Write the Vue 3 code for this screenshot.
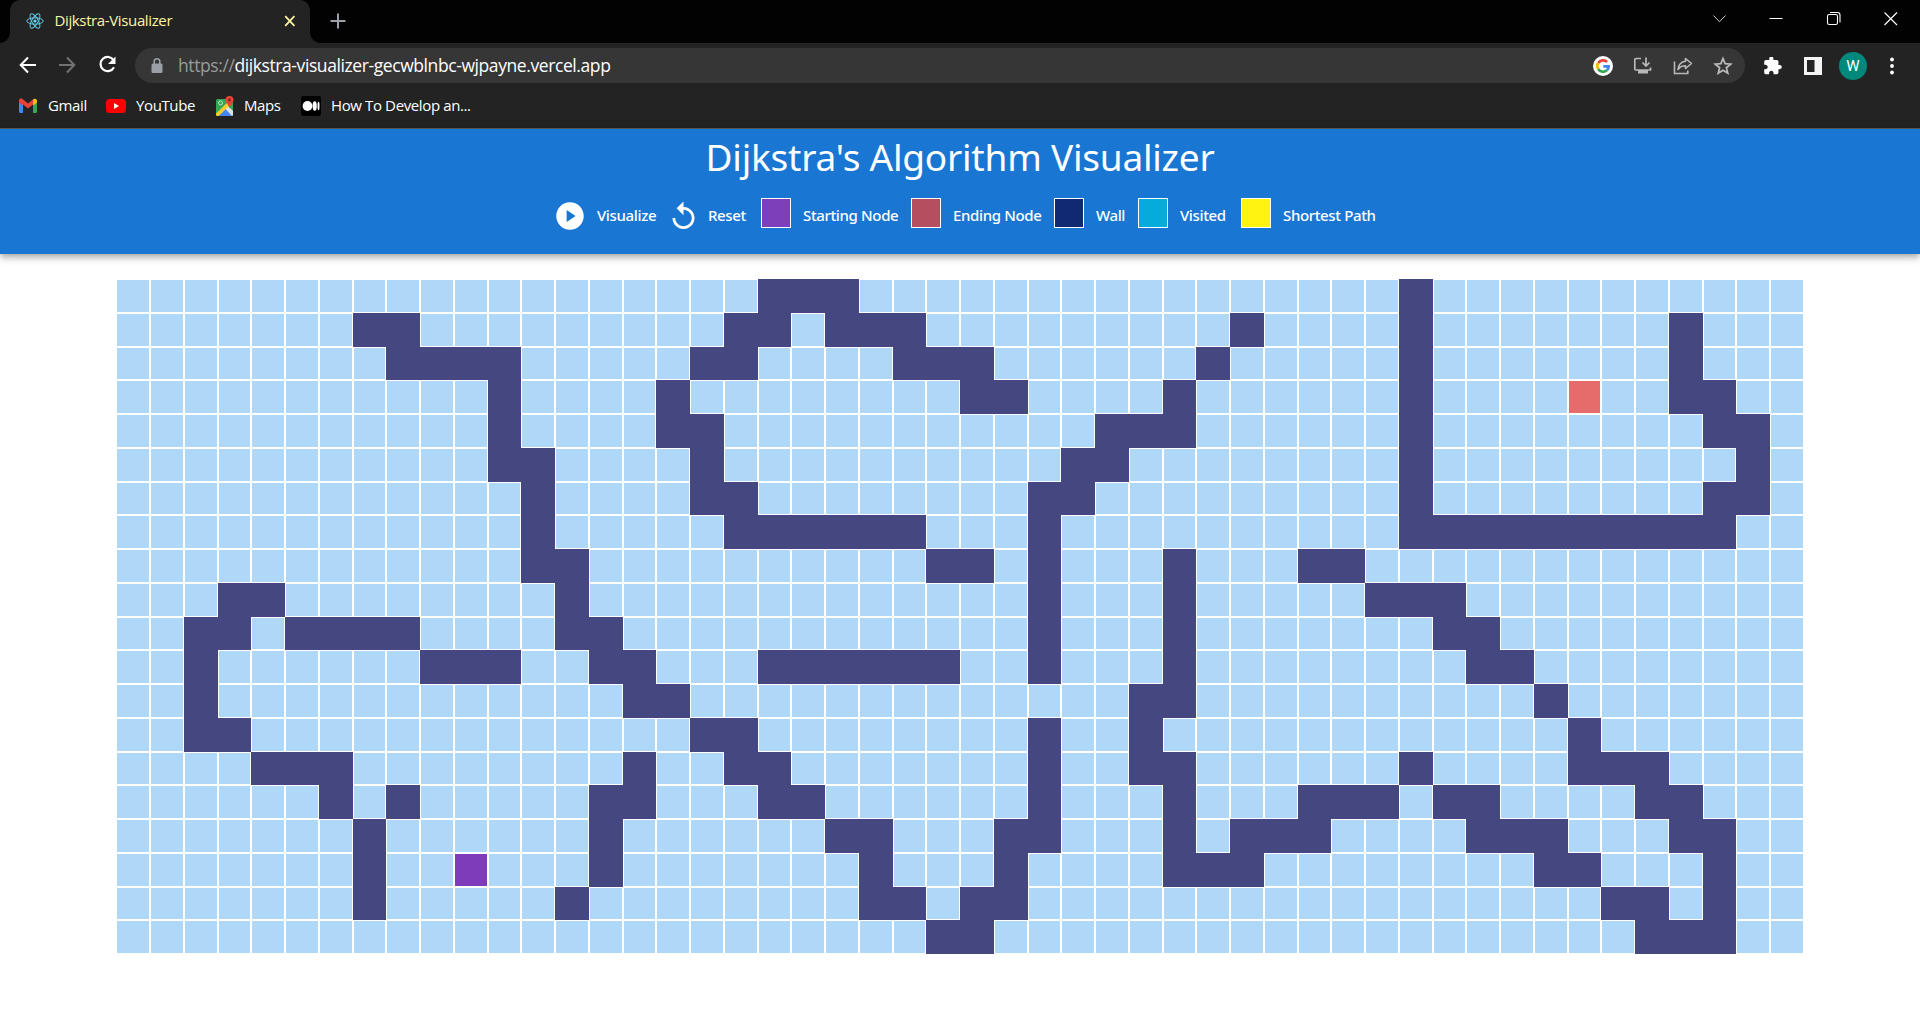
<script setup>
const ROWS = 20
const COLS = 50
const walls = [
  [[19, 21], [38, 38]],
  [[7, 8], [18, 19], [21, 23], [33, 33], [38, 38], [46, 46]],
  [[8, 11], [17, 18], [23, 25], [32, 32], [38, 38], [46, 46]],
  [[11, 11], [16, 16], [25, 26], [31, 31], [38, 38], [46, 47]],
  [[11, 11], [16, 17], [29, 31], [38, 38], [47, 48]],
  [[11, 12], [17, 17], [28, 29], [38, 38], [48, 48]],
  [[12, 12], [17, 18], [27, 28], [38, 38], [47, 48]],
  [[12, 12], [18, 23], [27, 27], [38, 47]],
  [[12, 13], [24, 25], [27, 27], [31, 31], [35, 36]],
  [[3, 4], [13, 13], [27, 27], [31, 31], [37, 39]],
  [[2, 3], [5, 8], [13, 14], [27, 27], [31, 31], [39, 40]],
  [[2, 2], [9, 11], [14, 15], [19, 24], [27, 27], [31, 31], [40, 41]],
  [[2, 2], [15, 16], [30, 31], [42, 42]],
  [[2, 3], [17, 18], [27, 27], [30, 30], [43, 43]],
  [[4, 6], [15, 15], [18, 19], [27, 27], [30, 31], [38, 38], [43, 45]],
  [[6, 6], [8, 8], [14, 15], [19, 20], [27, 27], [31, 31], [35, 37], [39, 40], [45, 46]],
  [[7, 7], [14, 14], [21, 22], [26, 27], [31, 31], [33, 35], [40, 42], [46, 47]],
  [[7, 7], [14, 14], [22, 22], [26, 26], [31, 33], [42, 43], [47, 47]],
  [[7, 7], [13, 13], [22, 23], [25, 26], [44, 45], [47, 47]],
  [[24, 25], [45, 47]],
]
const start = { row: 17, col: 10 }
const end = { row: 3, col: 43 }

function kind(row, col) {
  if (row === start.row && col === start.col) return 'start'
  if (row === end.row && col === end.col) return 'end'
  return walls[row].some(([a, b]) => col >= a && col <= b) ? 'wall' : ''
}
const grid = Array.from({ length: ROWS }, (_, r) => Array.from({ length: COLS }, (_, c) => kind(r, c)))
</script>

<template>
  <div class="window">
    <div class="tabstrip">
      <div class="tab">
        <svg class="react" width="18" height="18" viewBox="0 0 18 18" fill="none" stroke="#61c9e6" stroke-width="1">
          <ellipse cx="9" cy="9" rx="8.2" ry="3.2" />
          <ellipse cx="9" cy="9" rx="8.2" ry="3.2" transform="rotate(60 9 9)" />
          <ellipse cx="9" cy="9" rx="8.2" ry="3.2" transform="rotate(120 9 9)" />
          <circle cx="9" cy="9" r="1.6" fill="#61dafb" stroke="none" />
        </svg>
        <span class="tab-title">Dijkstra-Visualizer</span>
        <svg class="tab-close" width="12" height="12" viewBox="0 0 12 12" stroke="#fdf5a0" stroke-width="1.8"><path d="M1.2 1.2l9.2 9.6M10.4 1.2l-9.2 9.6" /></svg>
      </div>
      <svg class="newtab" width="16" height="18" viewBox="0 0 16 18" stroke="#9aa0a6" stroke-width="2"><path d="M0.5 9h15M8 1.500v15" /></svg>
      <div class="controls">
        <svg width="16" height="16" viewBox="0 0 16 16" fill="none" stroke="#ccc" stroke-width="1"><path d="M2.500 5.500l6 6.200 6-6.200" /></svg>
        <svg width="16" height="16" viewBox="0 0 16 16" stroke="#fff"><path d="M1.500 8.500h13" /></svg>
        <svg width="16" height="16" viewBox="0 0 16 16" fill="none" stroke="#fff" stroke-width="1.100"><rect x="1.500" y="4.500" width="10" height="10" rx="1.800" /><path d="M4 2.500h7.500a2.500 2.500 0 0 1 2.500 2.500v7.500" /></svg>
        <svg width="16" height="16" viewBox="0 0 16 16" stroke="#fff" stroke-width="1.200"><path d="M1.500 2.500l12.500 12.500M14 2.500L1.500 15" /></svg>
      </div>
    </div>

    <div class="toolbar">
      <div class="nav">
        <svg width="20" height="20" viewBox="0 0 20 20" fill="none" stroke="#fff" stroke-width="2"><path d="M18 10H3M10 2.500L2.700 10l7.300 7.500" /></svg>
        <svg width="20" height="20" viewBox="0 0 20 20" fill="none" stroke="#717171" stroke-width="2"><path d="M1 10h15M9 2.500l7.300 7.500-7.300 7.500" /></svg>
        <svg width="20" height="20" viewBox="0 0 20 20" fill="none" stroke="#fff" stroke-width="2.200"><path d="M15.700 5.300A7.100 7.100 0 1 0 16 12.200" /><path d="M17.500 1.500v7.500h-7.500z" fill="#fff" stroke="none" /></svg>
      </div>
      <div class="omnibox">
        <svg class="lock" width="12" height="18" viewBox="0 0 12 18"><rect x="0.500" y="6.500" width="11" height="9.500" rx="1.500" fill="#9aa0a6" /><path d="M3.200 7V4.500a2.800 2.800 0 0 1 5.600 0V7" fill="none" stroke="#9aa0a6" stroke-width="1.600" /></svg>
        <span class="url"><span class="scheme">https://</span>dijkstra-visualizer-gecwblnbc-wjpayne.vercel.app</span>
        <div class="actions">
          <svg width="20" height="20" viewBox="0 0 20 20" fill="none" stroke-width="2.700"><circle cx="10" cy="10" r="10" fill="#fff" /><path d="M14.100 6A5.700 5.700 0 0 0 5.200 7" stroke="#ea4335" /><path d="M5.200 7a5.700 5.700 0 0 0 0 6" stroke="#fbbc05" /><path d="M5.200 13a5.700 5.700 0 0 0 8.700 1.300" stroke="#34a853" /><path d="M13.900 14.300A5.700 5.700 0 0 0 15.700 10.300H10.300" stroke="#4285f4" /></svg>
          <svg width="20" height="18" viewBox="0 0 20 18" fill="none" stroke="#b9b9b9" stroke-width="1.700"><path d="M8 1.500H3.200A1.400 1.400 0 0 0 1.800 3v8.500A1.400 1.400 0 0 0 3.200 13h14.300V10.500M13 0.500V9M9.500 5.500L13 9l3.500-3.500" /><path d="M5 13h10v3.500H5z" fill="#b9b9b9" stroke="none" /></svg>
          <svg width="20" height="18" viewBox="0 0 20 18" fill="none" stroke="#b9b9b9" stroke-width="1.600"><path d="M1.500 4.500v12h13.300v-3" /><path d="M12.500 1.500l6 5-6 5V8.700C9 8.700 6.800 9.800 5 12.500 5.500 8 8 4.800 12.500 4.300z" stroke-linejoin="round" /></svg>
          <svg width="20" height="20" viewBox="0 0 20 20" fill="none" stroke="#b9b9b9" stroke-width="1.800"><path d="M10 2.500l2.100 5.100 5.600.5-4.300 3.600 1.300 5.400L10 14.200l-4.700 2.900 1.300-5.400-4.300-3.600 5.600-.5z" /></svg>
        </div>
      </div>
      <div class="extras">
        <svg width="18" height="18" viewBox="2 1.500 21 21.500" fill="#fff"><path d="M20.500 11H19V7c0-1.100-.9-2-2-2h-4V3.500a2.500 2.500 0 0 0-5 0V5H4c-1.100 0-1.990.9-1.990 2v3.800H3.500c1.490 0 2.700 1.210 2.700 2.700s-1.210 2.700-2.700 2.700H2V20c0 1.100.9 2 2 2h3.800v-1.500c0-1.490 1.210-2.700 2.700-2.700 1.490 0 2.700 1.210 2.700 2.700V22H17c1.100 0 2-.9 2-2v-4h1.500a2.500 2.500 0 0 0 0-5z" /></svg>
        <svg width="18" height="18" viewBox="0 0 18 18"><path fill="#f4f4f4" fill-rule="evenodd" d="M0 0h18v18H0zM3 3v12h7.500V3z" /></svg>
        <span class="avatar">W</span>
        <svg class="menu" width="6" height="18" viewBox="0 0 6 18" fill="#fff"><circle cx="3" cy="2.500" r="1.900" /><circle cx="3" cy="9" r="1.900" /><circle cx="3" cy="15.500" r="1.900" /></svg>
      </div>
    </div>

    <div class="bookmarks">
      <svg width="20" height="18" viewBox="0 0 20 18"><path d="M1 3v11.500a1.500 1.500 0 0 0 1.500 1.500H5V7z" fill="#4285f4" /><path d="M19 3v11.500a1.500 1.500 0 0 1-1.500 1.500H15V7z" fill="#34a853" /><path d="M1 3.500C1 1.500 3.300 1 4.500 2L10 6.500 15.500 2v5L10 11.500 5 7.500v1L1 5.500z" fill="#ea4335" /><path d="M15 2.500c1.500-1.500 4-1 4 1.500v1.500l-4 3z" fill="#fbbc04" /></svg>
      <span class="b1">Gmail</span>
      <svg width="20" height="14" viewBox="0 0 20 14"><rect width="20" height="14" rx="3.500" fill="#f00" /><path d="M8 4v6L13 7z" fill="#fff" /></svg>
      <span class="b2">YouTube</span>
      <svg width="18" height="21" viewBox="0 0 18 21"><rect y="3" width="17" height="17" rx="1.500" fill="#34a853" /><path d="M1 19.500L11 9l6 6v3.500a1.500 1.500 0 0 1-1.500 1.500H1z" fill="#dfe3e8" /><path d="M2 20l7.500-7 6.500 7z" fill="#4285f4" /><path d="M0 17.500L13 5l2 3L2.500 20H1.500A1.500 1.500 0 0 1 0 18.500z" fill="#fbcc2b" /><circle cx="4.500" cy="7" r="2" fill="none" stroke="#b9e3c4" /><path d="M13.500 0a4 4 0 0 0-4 4c0 3 3 4 4 8.500 1-4.500 4-5.500 4-8.500a4 4 0 0 0-4-4z" fill="#ea4335" /><circle cx="13.500" cy="4" r="1.400" fill="#8c1d18" /></svg>
      <span class="b3">Maps</span>
      <svg width="20" height="20" viewBox="0 0 20 20"><rect width="20" height="20" rx="2" fill="#000" /><ellipse cx="6.500" cy="10" rx="4.900" ry="5" fill="#fff" /><ellipse cx="13.700" cy="10" rx="2.100" ry="4.700" fill="#fff" /><ellipse cx="17.500" cy="10" rx="1" ry="4.200" fill="#fff" /></svg>
      <span class="b4">How To Develop an...</span>
    </div>

    <header class="appbar">
      <h1>Dijkstra's Algorithm Visualizer</h1>
      <div class="legend">
        <svg class="play" width="30" height="30" viewBox="0 0 24 24" fill="#fff"><path d="M12 1C5.900 1 1 5.900 1 12s4.900 11 11 11 11-4.900 11-11S18.100 1 12 1zM9.300 16.800V7.200l7.200 4.800z" /></svg>
        <span class="label l1">Visualize</span>
        <svg class="reset" width="33" height="33" viewBox="0 0 24 24" fill="#fff"><path d="M12 5V1L7 6l5 5V7c3.310 0 6 2.690 6 6s-2.690 6-6 6-6-2.690-6-6H4c0 4.420 3.580 8 8 8s8-3.580 8-8-3.580-8-8-8z" /></svg>
        <span class="label l2">Reset</span>
        <i class="swatch purple"></i><span class="label l3">Starting Node</span>
        <i class="swatch red"></i><span class="label l4">Ending Node</span>
        <i class="swatch navy"></i><span class="label l5">Wall</span>
        <i class="swatch cyan"></i><span class="label l6">Visited</span>
        <i class="swatch yellow"></i><span class="label l7">Shortest Path</span>
      </div>
    </header>

    <main class="grid">
      <div v-for="(row, r) in grid" :key="r" class="row">
        <div v-for="(cell, c) in row" :key="c" class="cell" :class="cell"></div>
      </div>
    </main>
  </div>
</template>

<style>
body { margin: 0; background: #fff; overflow: hidden; }
</style>

<style scoped>
.window { width: 1920px; height: 1020px; overflow: hidden; font-family: "Open Sans", "Noto Sans", sans-serif; background: #fff; }
svg { display: block; flex: none; }
span { white-space: nowrap; }
.tabstrip { height: 43px; background: #020202; display: flex; align-items: flex-start; }
.tab { position: relative; box-sizing: border-box; width: 300px; height: 43px; margin-left: 10px; padding: 0 14px 1px 16px; background: #232323; border-radius: 10px 10px 0 0; display: flex; align-items: center; }
.tab::before, .tab::after { content: ""; position: absolute; bottom: 0; width: 10px; height: 10px; }
.tab::before { left: -10px; background: radial-gradient(circle at 0 0, transparent 9.500px, #232323 10px); }
.tab::after { right: -10px; background: radial-gradient(circle at 100% 0, transparent 9.500px, #232323 10px); }
.tab-title { margin-left: 10.500px; padding-bottom: 2px; font-size: 15px; letter-spacing: -0.370px; color: #fdf5a0; }
.tab-close { margin-left: auto; }
.newtab { margin: 12px 0 0 20px; }
.controls { margin: 10px 21px 0 auto; display: flex; gap: 41.300px; }

.toolbar { height: 45px; background: #232323; display: flex; align-items: center; }
.nav { display: flex; gap: 20px; margin-left: 18px; padding-bottom: 1px; }
.omnibox { margin-left: 17px; width: 1610px; height: 35px; border-radius: 18px; background: #363636; display: flex; align-items: center; }
.lock { margin-left: 16px; }
.url { margin-left: 15px; padding-bottom: 1px; font-size: 17.500px; letter-spacing: -0.410px; color: #fff; }
.scheme { color: #9a9a9a; }
.actions { margin-left: auto; margin-right: 12px; display: flex; align-items: center; gap: 20px; }
.extras { display: flex; align-items: center; margin-left: 19px; gap: 22px; }
.extras .avatar { width: 28px; height: 28px; margin: 0 -5px; border-radius: 50%; background: #00897b; color: #fff; font: 15px/28px Roboto, sans-serif; text-align: center; }
.extras .menu { margin-left: 5px; }

.bookmarks { height: 40px; background: #232323; display: flex; align-items: center; padding-left: 18px; font-size: 15px; color: #fff; letter-spacing: -0.380px; box-sizing: border-box; padding-bottom: 4px; }
.bookmarks span { flex: none; margin-left: 10px; padding-bottom: 2px; }
.b1 { width: 58px; }
.b2 { width: 80px; }
.b3 { width: 57px; }

.appbar { height: 126px; box-sizing: border-box; border-top: 1px solid #555; background: #1976d2; color: #fff; position: relative; box-shadow: 0 2px 5px -1px rgba(0,0,0,.2), 0 5px 6px rgba(0,0,0,.14), 0 1px 12px rgba(0,0,0,.12); }
h1 { margin: 0; height: 58px; font: 400 37px/56px "Noto Sans", sans-serif; letter-spacing: -0.220px; text-align: center; }
.legend { display: flex; align-items: center; padding-left: 555px; height: 58px; font: 500 15px/20px "Noto Sans", sans-serif; letter-spacing: -0.360px; }
.label { flex: none; padding-bottom: 2px; }
.swatch { flex: none; box-sizing: border-box; width: 30px; height: 30px; border: 1px solid #fff; margin-top: -6px; margin-right: 12px; }
.l1 { width: 70px; margin-left: 12px; }
.l2 { width: 53px; margin-left: 8px; }
.l3 { width: 108px; } .l4 { width: 101px; } .l5 { width: 42px; } .l6 { width: 61px; }
.purple { background: #7e3fba; } .red { background: #b54f60; } .navy { background: #112873; } .cyan { background: #05abdb; } .yellow { background: #fff312; }

.grid { width: 1687.500px; margin: 25px auto 0; }
.row { display: flex; height: 33.750px; }
.cell { box-sizing: border-box; width: 33.750px; height: 33.750px; border: 1px solid #fff; background: #afd8f8; }
.wall { background: #444780; border-color: #444780; }
.start { background: #7e3cba; }
.end { background: #e66c6b; }
</style>
